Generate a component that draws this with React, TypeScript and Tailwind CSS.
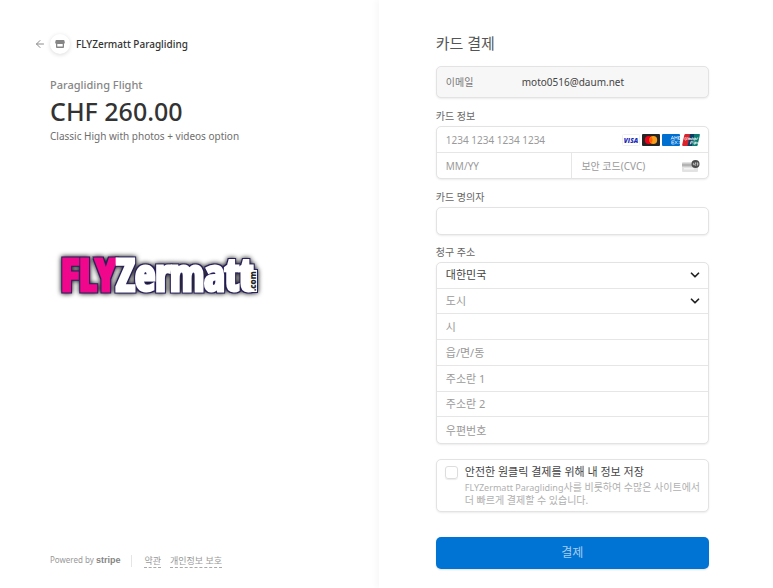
import React from 'react';
import { ArrowLeft, ChevronDown } from 'lucide-react';

const fieldClass =
  'block h-full w-full min-w-0 bg-transparent px-[9px] text-[11px] text-[#444] placeholder:text-[#9a9a9a] outline-none focus:bg-blue-50';
const cardFieldClass = 'h-full min-w-0 flex-1 px-[9px] text-[10px] placeholder:text-[#9a9a9a] outline-none';
const boxClass =
  'overflow-hidden rounded-[5px] border border-[#e3e3e3] bg-white shadow-[0_1px_2px_rgba(0,0,0,0.08)]';
const labelClass = 'block h-4 text-[10px] leading-4 text-[#666]';

const StoreIcon = () => (
  <svg viewBox="0 0 10 10" className="h-[10px] w-[10px]" aria-hidden="true">
    <path
      fill="#858585"
      fillRule="evenodd"
      d="M1.4 1h7.2c.5 0 .7.2.8.6l.4 1.9c.1.7-.3 1.1-.8 1.2v3.4c0 .6-.3.9-.9.9H1.9C1.3 9 1 8.7 1 8.1V4.7C.5 4.6.1 4.2.2 3.5l.4-1.9c.1-.4.3-.6.8-.6zM2.3 4.9v2.7h5.4V4.9z"
    />
  </svg>
);

const VisaIcon = () => (
  <svg viewBox="0 0 18 12" className="h-3 w-[18px]" role="img" aria-label="Visa">
    <rect x=".5" y=".5" width="17" height="11" rx="1" fill="#fff" stroke="#f0f0f0" />
    <text
      x="9"
      y="8.5"
      textAnchor="middle"
      fontFamily="Open Sans, sans-serif"
      fontSize="6.5"
      fontWeight="800"
      fontStyle="italic"
      fill="#1b2ab8"
    >
      VISA
    </text>
  </svg>
);

const MastercardIcon = () => (
  <svg viewBox="0 0 18 12" className="h-3 w-[18px]" role="img" aria-label="Mastercard">
    <rect width="18" height="12" rx="1" fill="#252525" />
    <circle cx="6.7" cy="6" r="3.9" fill="#eb001b" />
    <circle cx="11.3" cy="6" r="3.9" fill="#f79e1b" />
    <path d="M9 2.85a3.9 3.9 0 0 1 0 6.3 3.9 3.9 0 0 1 0-6.3z" fill="#ff5f00" />
  </svg>
);

const AmexIcon = () => (
  <svg viewBox="0 0 18 12" className="h-3 w-[18px]" role="img" aria-label="American Express">
    <rect width="18" height="12" rx="1" fill="#016fd0" />
    <g fill="none" stroke="#fff" strokeWidth=".6">
      <path d="M9 5.6 10.5 2.2l1.5 3.4M9.6 4.6h1.8M12.8 5.6V2.4l1.2 1.8 1.2-1.8v3.2M18 2.5h-1.5v3H18M16.5 4H18" />
      <path d="M12.5 6.8H9.8V10h2.7M9.8 8.4h2.4M12.8 6.8l2.7 3.2M15.5 6.8 12.8 10M16.8 7 18 8.4 16.8 10" />
    </g>
  </svg>
);

const UnionPayIcon = () => (
  <svg viewBox="0 0 18 12" className="h-3 w-[18px]" role="img" aria-label="UnionPay">
    <path d="M3.5 0h5L6 12H1.2C.3 12 0 11.5.2 10.8L2.3 1C2.4.4 2.9 0 3.5 0z" fill="#d9222a" />
    <path d="M8 0h5l-2.5 12h-5z" fill="#0b3f67" />
    <path d="M12.5 0h4.3c.9 0 1.2.5 1 1.2L15.700 11c-.1.600-.6 1-1.200 1H10z" fill="#0a7b72" />
    <g fill="none" stroke="#fff" strokeWidth=".7">
      <path d="m3.3 3-.5 2.300c-.1.900 1.700.9 1.900 0L5.200 3M6 6l.4-2h1.200l-.4 2M8.600 4l-.4 2M9.500 6l.4-2h1.300l-.4 2M12.300 4h1.300l-.4 2h-1.300zM14.600 6l.4-2h1.300" />
      <path d="M8.300 10.300 9 7.300h1.600c1 0 .8 1.600-.3 1.600H8.700M12.400 8h1.300l-.4 2.100h-1.400l.2-1.200h1.300M14.600 7.800l.4 2 1.300-2" />
    </g>
  </svg>
);

const CvcIcon = () => (
  <svg viewBox="0 0 18 12" className="h-3 w-[18px]" aria-hidden="true">
    <rect y="2" width="16" height="10" rx="1" fill="#e2e2e2" />
    <path d="M0 3.500h10v3H0z" fill="#b3b3b3" />
    <path d="M2 8h10v1.500H2z" fill="#f3f3f3" />
    <circle cx="13.500" cy="4" r="4" fill="#4b4b4b" />
    <path
      d="M11.400 2.800v2.400M12.800 2.800h1v1.100h-1v1.300h1.100M14.800 2.800h1v2.400h-1M14.900 4h.9"
      fill="none"
      stroke="#fff"
      strokeWidth=".6"
    />
  </svg>
);

const BrandLogo = () => (
  <svg viewBox="0 0 216 60" className="h-[60px] w-[216px]" role="img" aria-label="FLYZermatt.com">
    <defs>
      <filter id="outline" x="-10%" y="-30%" width="120%" height="160%" colorInterpolationFilters="sRGB">
        <feMorphology in="SourceAlpha" operator="dilate" radius="1" result="fat" />
        <feFlood floodColor="#28205c" />
        <feComposite in2="fat" operator="in" result="edge" />
        <feGaussianBlur in="fat" stdDeviation="2.5" result="soft" />
        <feMerge>
          <feMergeNode in="soft" />
          <feMergeNode in="edge" />
          <feMergeNode in="SourceGraphic" />
        </feMerge>
      </filter>
    </defs>
    <g filter="url(#outline)">
      <text
        x="11"
        y="46"
        fontFamily="Open Sans Condensed, Roboto Condensed, sans-serif"
        fontWeight="800"
        fontSize="44"
        strokeWidth="3"
      >
        <tspan fill="#f0078c" stroke="#f0078c">FLY</tspan>
        <tspan fill="#fff" stroke="#fff">Zermatt</tspan>
      </text>
      <rect x="199" y="25" width="8" height="22" fill="#fff" />
    </g>
    <text
      transform="translate(206 46) rotate(-90)"
      fontFamily="Open Sans, sans-serif"
      fontSize="8"
      fontWeight="800"
      fill="#222"
    >
      .com
    </text>
  </svg>
);

const Summary = () => {
  return (
    <section className="flex w-[49%] flex-col pt-[34px] pr-6 pb-[19px] pl-[34px]">
      <header className="flex h-5 items-center">
        <a href="#back" aria-label="Back" className="text-[#8c8c8c]">
          <ArrowLeft className="h-3 w-3" strokeWidth={2} />
        </a>
        <span className="ml-1 flex h-5 w-5 items-center justify-center rounded-full bg-white shadow-[0_1px_4px_rgba(0,0,0,0.15)]">
          <StoreIcon />
        </span>
        <span className="ml-[6px] text-[10px] font-medium text-[#333]">FLYZermatt Paragliding</span>
      </header>

      <div className="mt-[22px] pl-4">
        <h1 className="text-[11px] leading-[18px] font-medium text-[#858585]">Paragliding Flight</h1>
        <p className="text-[25px] leading-[34px] font-medium text-[#333]">CHF 260.00</p>
        <p className="text-[10px] leading-4 text-[#6e6e6e]">Classic High with photos + videos option</p>
      </div>

      <div className="mt-[101px] pl-4">
        <BrandLogo />
      </div>

      <footer className="mt-auto flex h-4 items-center pl-4 text-[9px] text-[#999]">
        <a href="#stripe" className="text-[8px]">
          Powered by{' '}
          <b className="font-['Liberation_Sans'] text-[9px] font-bold text-[#858585]">stripe</b>
        </a>
        <span className="ml-[11px] h-3 w-px bg-[#e5e5e5]" />
        <a href="#terms" className="ml-3 border-b border-dashed border-[#aaa] leading-3">
          약관
        </a>
        <a href="#privacy" className="ml-[9px] border-b border-dashed border-[#aaa] leading-3">
          개인정보 보호
        </a>
      </footer>
    </section>
  );
};

const SelectRow = ({ label, value, muted }: { label: string; value: string; muted?: boolean }) => (
  <div className="relative min-h-0">
    <select
      aria-label={label}
      defaultValue={value}
      className={`block h-full w-full appearance-none bg-transparent px-[9px] text-[11px] outline-none ${
        muted ? 'text-[#9a9a9a]' : 'text-[#444]'
      }`}
    >
      <option>{value}</option>
    </select>
    <ChevronDown
      className="pointer-events-none absolute inset-y-0 right-[6px] my-auto h-[14px] w-[14px] text-[#222]"
      strokeWidth={3}
    />
  </div>
);

const PaymentForm = () => {
  const addressFields = ['시', '읍/면/동', '주소란 1', '주소란 2', '우편번호'];

  return (
    <form
      className="flex-1 pt-[33px] pr-16 pb-[19px] pl-[57px] shadow-[-3px_0_6px_rgba(0,0,0,0.03)]"
      onSubmit={(e) => e.preventDefault()}
    >
      <h2 className="text-[15px] leading-5 text-[#555]">카드 결제</h2>

      <div className="mt-[13px] flex h-8 items-center rounded-[5px] border border-[#e3e3e3] bg-[#f7f7f7] px-[9px] text-[10px] shadow-[0_1px_2px_rgba(0,0,0,0.08)]">
        <label htmlFor="email" className="w-[76px] text-[#777]">이메일</label>
        <input
          id="email"
          type="email"
          readOnly
          defaultValue="moto0516@daum.net"
          className="min-w-0 flex-1 bg-transparent text-[#444] outline-none"
        />
      </div>

      <label htmlFor="card" className={`${labelClass} mt-[10px]`}>카드 정보</label>
      <div className={`${boxClass} mt-[2px]`}>
        <div className="flex h-[26px] items-center border-b border-[#e6e6e6] pr-2">
          <input id="card" placeholder="1234 1234 1234 1234" className={cardFieldClass} />
          <div className="flex gap-[2px]">
            <VisaIcon />
            <MastercardIcon />
            <AmexIcon />
            <UnionPayIcon />
          </div>
        </div>
        <div className="grid h-[25px] grid-cols-2">
          <div className="flex border-r border-[#e6e6e6]">
            <input aria-label="MM/YY" placeholder="MM/YY" className={cardFieldClass} />
          </div>
          <div className="flex items-center pr-2">
            <input aria-label="보안 코드(CVC)" placeholder="보안 코드(CVC)" className={cardFieldClass} />
            <CvcIcon />
          </div>
        </div>
      </div>

      <label htmlFor="name" className={`${labelClass} mt-[10px]`}>카드 명의자</label>
      <div className={`${boxClass} mt-[2px] h-7`}>
        <input id="name" className={fieldClass} />
      </div>

      <fieldset className="mt-[9px]">
        <legend className={labelClass}>청구 주소</legend>
        <div className={`${boxClass} mt-[2px] grid h-[182px] grid-rows-7 divide-y divide-[#e6e6e6]`}>
          <SelectRow label="국가" value="대한민국" />
          <SelectRow label="도시" value="도시" muted />
          {addressFields.map((field) => (
            <div key={field} className="min-h-0">
              <input aria-label={field} placeholder={field} className={fieldClass} />
            </div>
          ))}
        </div>
      </fieldset>

      <div className={`${boxClass} mt-[15px] flex py-[5px] pl-2`}>
        <input
          id="save"
          type="checkbox"
          className="mt-px h-[13px] w-[13px] shrink-0 appearance-none rounded-[3px] border border-[#ddd] shadow-[0_1px_1px_rgba(0,0,0,0.08)] checked:bg-[#0074d4]"
        />
        <label htmlFor="save" className="ml-[7px]">
          <span className="block text-[11px] leading-[14px] text-[#444]">안전한 원클릭 결제를 위해 내 정보 저장</span>
          <span className="mt-[2px] block text-[10px] leading-3 break-keep text-[#b0b0b0]">
            <span className="text-[9px]">FLYZermatt Paragliding</span>사를 비롯하여 수많은 사이트에서 더 빠르게
            결제할 수 있습니다.
          </span>
        </label>
      </div>

      <button
        type="submit"
        className="mt-[25px] block h-8 w-full rounded-[5px] bg-[#0074d4] text-xs text-[#a5cdf0] shadow-[0_1px_2px_rgba(0,0,0,0.12)]"
      >
        결제
      </button>
    </form>
  );
};

const App = () => {
  return (
    <main className="flex min-h-screen bg-white font-['Noto_Sans','Noto_Sans_CJK_KR',sans-serif]">
      <Summary />
      <PaymentForm />
    </main>
  );
};

export default App;
